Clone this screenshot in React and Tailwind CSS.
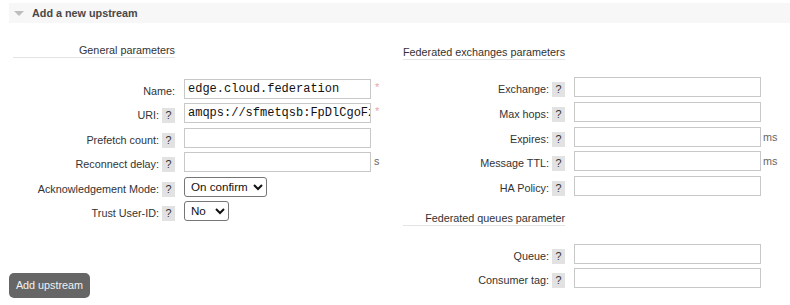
import React from "react";

const Help = () => (
  <span className="ml-[3px] inline-block w-[13px] h-[15px] leading-[15px] bg-[#e2e2e2] text-center text-[#333]">?</span>
);

function Row({ label, help = true, children, unit, mand, unitCls = "" }) {
  return (
    <div className="flex h-[20px]">
      <div className="w-[162px] shrink-0 flex justify-end items-end">
        <span className="leading-[15px] whitespace-nowrap">{label}</span>
        {help && <Help />}
      </div>
      <div className="ml-[9px] flex items-start">
        {children}
        {mand && <span className="ml-[4px] mt-[2px] text-[#f0a0a8] leading-[12px]">*</span>}
        {unit && <span className={"leading-[12px] text-[#666] " + unitCls}>{unit}</span>}
      </div>
    </div>
  );
}

const Input = ({ value = "" }) => (
  <input
    type="text"
    readOnly
    defaultValue={value}
    className="w-[187px] h-[20px] border border-[#c8c8c8] bg-white pl-[3px] font-['Liberation_Mono',monospace] text-[12px] text-[#111] outline-none"
  />
);

const Heading = ({ children, cls }) => (
  <div className={"w-[162px] text-right leading-[13px] border-b border-[#e4e4e4] whitespace-nowrap " + cls}>
    {children}
  </div>
);

export default function App() {
  return (
    <div className="w-[790px] h-[305px] overflow-hidden bg-white font-['Liberation_Sans',Arial,sans-serif] text-[10.8px] text-[#333]">
      <div className="mt-[3px] ml-[9px] h-[20px] bg-[#f7f7f7] flex items-center">
        <span className="ml-[5px] w-0 h-0 border-l-[5px] border-r-[5px] border-t-[5px] border-l-transparent border-r-transparent border-t-[#bdbdbd]"></span>
        <span className="ml-[8px] font-bold text-[#484848]">Add a new upstream</span>
      </div>
      <div className="flex">
        <div className="ml-[13px] w-[390px] flex flex-col">
          <Heading cls="mt-[21px]">General parameters</Heading>
          <div className="mt-[21px] flex flex-col gap-[4.4px]">
            <Row label="Name:" help={false} mand>
              <Input value="edge.cloud.federation" />
            </Row>
            <Row label="URI:" mand>
              <Input value="amqps://sfmetqsb:FpDlCgoFzbXb1QkWn@cow.rmq2.cloudamqp.com/sfmetqsb" />
            </Row>
            <Row label="Prefetch count:">
              <Input />
            </Row>
            <Row label="Reconnect delay:" unit="s" unitCls="ml-[3px] mt-[3px]">
              <Input />
            </Row>
            <Row label="Acknowledgement Mode:">
              <select className="w-[83px] h-[20px] border border-[#767676] rounded-[3px] bg-white pl-[2px] text-[11.6px] text-[#111]" defaultValue="on-confirm">
                <option value="on-confirm">On confirm</option>
                <option value="on-publish">On publish</option>
                <option value="no-ack">No ack</option>
              </select>
            </Row>
            <Row label="Trust User-ID:">
              <select className="w-[45px] h-[20px] border border-[#767676] rounded-[3px] bg-white pl-[2px] text-[11.6px] text-[#111]" defaultValue="no">
                <option value="no">No</option>
                <option value="yes">Yes</option>
              </select>
            </Row>
          </div>
          <button className="-ml-[4px] mt-[52px] w-[81px] h-[25px] rounded-[5px] bg-[#666] text-[#f2f2f2] text-[10.8px]">
            Add upstream
          </button>
        </div>
        <div className="flex flex-col">
          <Heading cls="mt-[23px]">Federated exchanges parameters</Heading>
          <div className="mt-[17px] flex flex-col gap-[4.75px]">
            <Row label="Exchange:">
              <Input />
            </Row>
            <Row label="Max hops:">
              <Input />
            </Row>
            <Row label="Expires:" unit="ms" unitCls="ml-[2px] mt-[4px]">
              <Input />
            </Row>
            <Row label="Message TTL:" unit="ms" unitCls="ml-[2px] mt-[4px]">
              <Input />
            </Row>
            <Row label="HA Policy:">
              <Input />
            </Row>
          </div>
          <Heading cls="mt-[16px]">Federated queues parameter</Heading>
          <div className="mt-[18px] flex flex-col gap-[4px]">
            <Row label="Queue:">
              <Input />
            </Row>
            <Row label="Consumer tag:">
              <Input />
            </Row>
          </div>
        </div>
      </div>
    </div>
  );
}
